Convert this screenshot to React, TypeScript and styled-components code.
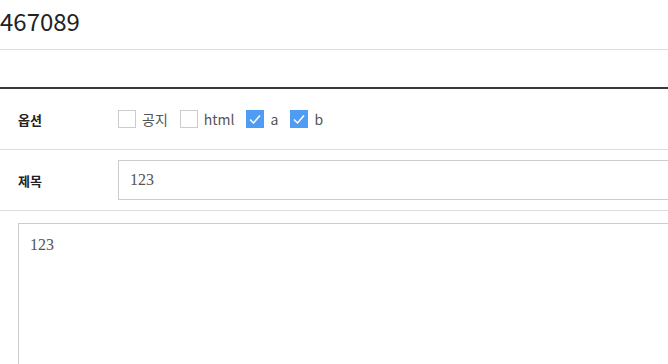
import React from "react";
import styled, { createGlobalStyle } from "styled-components";

const Global = createGlobalStyle`
  html, body { margin: 0; padding: 0; background: #fff; overflow: hidden; }
  body { font-family: "Noto Sans CJK KR", "Noto Sans", sans-serif; color: #222; }
`;

const Page = styled.div`
  width: 668px;
  height: 364px;
  overflow: hidden;
`;

const TitleBar = styled.div`
  height: 49px;
  border-bottom: 1px solid #dddddd;
  display: flex;
  align-items: center;
`;

const Title = styled.h1`
  margin: 0;
  font-size: 24px;
  font-weight: 400;
  color: #222;
  line-height: 1;
  padding-bottom: 7px;
`;

const Form = styled.div`
  margin-top: 37px;
  border-top: 2px solid #3a3a3a;
  width: 900px;
`;

const Row = styled.div`
  display: flex;
  align-items: center;
  height: 60px;
  border-bottom: 1px solid #dddddd;
`;

const Label = styled.div`
  width: 118px;
  flex: none;
  padding-left: 18px;
  box-sizing: border-box;
  font-size: 13px;
  font-weight: 700;
  color: #222;
`;

const Field = styled.div`
  flex: 1;
  display: flex;
  align-items: center;
`;

const Check = styled.label`
  display: flex;
  align-items: center;
  margin-right: 12px;
  font-size: 14px;
  color: #555;
`;

const Box = styled.span<{ $on?: boolean }>`
  width: 18px;
  height: 18px;
  box-sizing: border-box;
  border: 1px solid ${(p) => (p.$on ? "#4f9cf5" : "#cccccc")};
  background: ${(p) => (p.$on ? "#4f9cf5" : "#fff")};
  display: flex;
  align-items: center;
  justify-content: center;
  margin-right: 6px;
`;

const TextInput = styled.div`
  width: 700px;
  height: 40px;
  box-sizing: border-box;
  border: 1px solid #cccccc;
  display: flex;
  align-items: center;
  padding-left: 11px;
  font-family: "Liberation Serif", serif;
  font-size: 16px;
  color: #555;
`;

const Area = styled.div`
  margin: 12px 0 0 18px;
  width: 800px;
  height: 200px;
  box-sizing: border-box;
  border: 1px solid #cccccc;
  padding: 12px 11px;
  font-family: "Liberation Serif", serif;
  font-size: 16px;
  color: #555;
`;

const Tick = () => (
  <svg width="14" height="14" viewBox="0 0 14 14">
    <path d="M2 7.5 L5.5 11 L12 3.5" fill="none" stroke="#fff" strokeWidth="1.5" />
  </svg>
);

const options = [
  { label: "공지", on: false },
  { label: "html", on: false },
  { label: "a", on: true },
  { label: "b", on: true },
];

export default function App() {
  return (
    <Page>
      <Global />
      <TitleBar>
        <Title>467089</Title>
      </TitleBar>
      <Form>
        <Row>
          <Label>옵션</Label>
          <Field>
            {options.map((o) => (
              <Check key={o.label}>
                <Box $on={o.on}>{o.on && <Tick />}</Box>
                {o.label}
              </Check>
            ))}
          </Field>
        </Row>
        <Row>
          <Label>제목</Label>
          <Field>
            <TextInput>123</TextInput>
          </Field>
        </Row>
      </Form>
      <Area>123</Area>
    </Page>
  );
}
